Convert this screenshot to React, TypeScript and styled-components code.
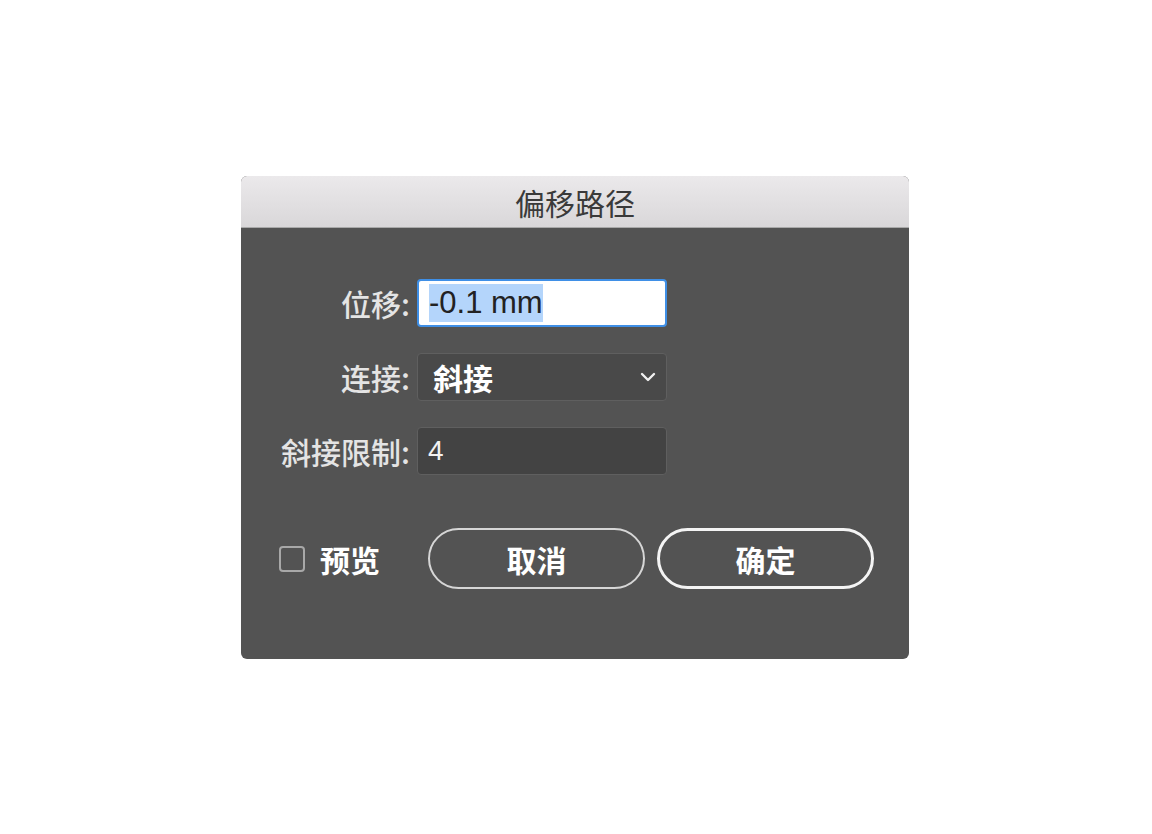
import styled, { createGlobalStyle } from "styled-components";

const GlobalStyle = createGlobalStyle`
  html, body {
    margin: 0;
    padding: 0;
    background: #ffffff;
  }
  body {
    font-family: "Liberation Sans", "Noto Sans CJK SC", sans-serif;
  }
`;

const Page = styled.div`
  width: 1152px;
  height: 834px;
  padding: 176px 0 0 241px;
  box-sizing: border-box;
`;

const Dialog = styled.div`
  width: 668px;
  height: 483px;
  background: #535353;
  border-radius: 6px;
  overflow: hidden;
  display: flex;
  flex-direction: column;
`;

const TitleBar = styled.div`
  height: 51px;
  flex-shrink: 0;
  background: linear-gradient(#ebe9eb, #d9d7d9);
  border-bottom: 1px solid #a9a9a9;
  display: flex;
  align-items: center;
  justify-content: center;
  font-family: "Noto Sans CJK SC", sans-serif;
  font-size: 30px;
  color: #3a3a3a;
`;

const Form = styled.div`
  display: grid;
  grid-template-columns: 169px 250px;
  grid-auto-rows: 48px;
  column-gap: 7px;
  row-gap: 26px;
  padding-top: 51px;
  align-items: center;
`;

const Label = styled.div`
  text-align: right;
  font-family: "Noto Sans CJK SC", sans-serif;
  font-size: 30px;
  font-weight: 500;
  color: #e4e4e4;
  white-space: nowrap;
`;

const Field = styled.div<{ $focused?: boolean; $tone?: string }>`
  height: 48px;
  box-sizing: border-box;
  border-radius: 4px;
  display: flex;
  align-items: center;
  padding: 0 10px;
  background: ${(p) => (p.$focused ? "#ffffff" : p.$tone || "#474747")};
  border: ${(p) => (p.$focused ? "2px solid #3f8fe6" : "1px solid #5f5f5f")};
  color: ${(p) => (p.$focused ? "#222" : "#f2f2f2")};
  font-size: 28px;
`;

const Selected = styled.span`
  background: #b4d5fb;
  font-size: 31px;
  line-height: 38px;
`;

const SelectText = styled.span`
  flex: 1;
  font-family: "Noto Sans CJK SC", sans-serif;
  font-weight: 700;
  font-size: 30px;
  color: #ffffff;
  padding-left: 5px;
`;

const Actions = styled.div`
  display: flex;
  align-items: center;
  padding: 53px 0 0 38px;
`;

const Check = styled.span`
  width: 26px;
  height: 26px;
  box-sizing: border-box;
  border: 2px solid #a8a8a8;
  border-radius: 4px;
  flex-shrink: 0;
`;

const CheckLabel = styled.span`
  margin-left: 15px;
  font-family: "Noto Sans CJK SC", sans-serif;
  font-weight: 700;
  font-size: 30px;
  color: #ffffff;
  width: 108px;
`;

const Button = styled.button<{ $primary?: boolean }>`
  width: 217px;
  height: 61px;
  box-sizing: border-box;
  border-radius: 31px;
  background: transparent;
  border: ${(p) => (p.$primary ? "3px solid #f4f4f4" : "2px solid #d6d6d6")};
  color: #ffffff;
  font-family: "Noto Sans CJK SC", sans-serif;
  font-weight: 700;
  font-size: 30px;
  margin-left: ${(p) => (p.$primary ? "12px" : "0")};
  padding: 0;
`;

export default function App() {
  return (
    <Page>
      <GlobalStyle />
      <Dialog>
        <TitleBar>偏移路径</TitleBar>
        <Form>
          <Label>位移:</Label>
          <Field $focused>
            <Selected>-0.1 mm</Selected>
          </Field>
          <Label>连接:</Label>
          <Field $tone="#494949">
            <SelectText>斜接</SelectText>
            <svg width="16" height="10" viewBox="0 0 16 10">
              <path d="M2 2 L8 8 L14 2" fill="none" stroke="#f0f0f0" strokeWidth="2.4" strokeLinecap="round" strokeLinejoin="round" />
            </svg>
          </Field>
          <Label>斜接限制:</Label>
          <Field $tone="#434343">4</Field>
        </Form>
        <Actions>
          <Check />
          <CheckLabel>预览</CheckLabel>
          <Button>取消</Button>
          <Button $primary>确定</Button>
        </Actions>
      </Dialog>
    </Page>
  );
}
